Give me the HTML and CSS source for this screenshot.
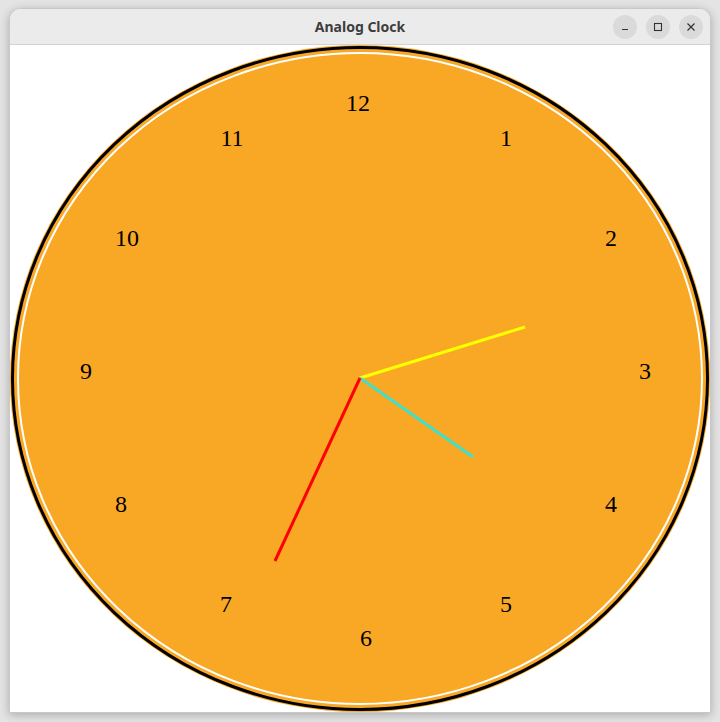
FILE: index.html
```html
<!DOCTYPE html>
<html>
<head>
<meta charset="utf-8">
<title>Analog Clock</title>
<link rel="stylesheet" href="styles.css">
</head>
<body>
<div class="window">
  <div class="titlebar">
    <span class="title">Analog Clock</span>
    <div class="controls">
      <span class="btn"><svg width="10" height="10" viewBox="0 0 10 10"><path d="M2 7.5h6" stroke="#333" stroke-width="1.2"/></svg></span>
      <span class="btn"><svg width="10" height="10" viewBox="0 0 10 10"><rect x="1.5" y="1.5" width="7" height="7" fill="none" stroke="#333" stroke-width="1.1"/></svg></span>
      <span class="btn"><svg width="10" height="10" viewBox="0 0 10 10"><path d="M1.5 1.5l7 7M8.5 1.5l-7 7" stroke="#333" stroke-width="1.2"/></svg></span>
    </div>
  </div>
  <div class="content">
    <svg class="clock" width="700" height="667" viewBox="0 0 700 667">
      <ellipse cx="350" cy="333.5" rx="350" ry="333.5" fill="#f9a826"/>
      <ellipse cx="350" cy="333.5" rx="347.5" ry="331" fill="none" stroke="#000" stroke-width="3"/>
      <ellipse cx="350" cy="333.5" rx="342" ry="325.5" fill="none" stroke="#fff" stroke-width="2"/>
      <g class="nums">
        <text x="348" y="66">12</text>
        <text x="496" y="101">1</text>
        <text x="601" y="201">2</text>
        <text x="635" y="334">3</text>
        <text x="601" y="467">4</text>
        <text x="496" y="567">5</text>
        <text x="356" y="601">6</text>
        <text x="216" y="567">7</text>
        <text x="111" y="467">8</text>
        <text x="76" y="334">9</text>
        <text x="117" y="201">10</text>
        <text x="222" y="101">11</text>
      </g>
      <line x1="350" y1="333" x2="515" y2="282" stroke="#ffff00" stroke-width="3"/>
      <line x1="350" y1="333" x2="463" y2="412" stroke="#40e0c8" stroke-width="3"/>
      <line x1="350" y1="333" x2="265" y2="516" stroke="#ff0000" stroke-width="3"/>
    </svg>
  </div>
</div>
</body>
</html>
```

FILE: styles.css
```css
html, body {
  margin: 0;
  padding: 0;
}
body {
  width: 720px;
  height: 722px;
  background: #e4e4e4;
  overflow: hidden;
}
.window {
  margin: 8px 0 0 9px;
  width: 702px;
  border-radius: 12px 12px 0 0;
  background: #fff;
  box-shadow: 0 2px 10px rgba(0,0,0,0.25);
  border: 1px solid #c8c8c8;
  box-sizing: border-box;
  overflow: hidden;
}
.titlebar {
  height: 35px;
  background: #ebebeb;
  border-bottom: 1px solid #d2d2d2;
  display: flex;
  align-items: center;
  justify-content: center;
  position: relative;
}
.title {
  font-family: "Noto Sans", "DejaVu Sans", sans-serif;
  font-weight: bold;
  font-size: 14px;
  color: #3d3d3d;
}
.controls {
  position: absolute;
  right: 7px;
  top: 6px;
  display: flex;
  gap: 9px;
}
.btn {
  width: 24px;
  height: 24px;
  border-radius: 50%;
  background: #dadada;
  display: flex;
  align-items: center;
  justify-content: center;
}
.content {
  width: 700px;
  height: 667px;
  background: #fff;
}
.clock {
  display: block;
}
.nums text {
  font-family: "Liberation Serif", "Times New Roman", serif;
  font-size: 24px;
  fill: #000;
  text-anchor: middle;
}
```
